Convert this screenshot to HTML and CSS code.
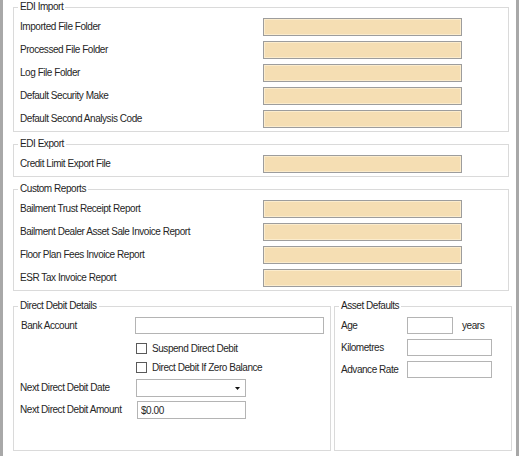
FILE: index.html
```html
<!DOCTYPE html>
<html lang="en">
<head>
    <meta charset="UTF-8">
    <title>Settings</title>
    <link rel="stylesheet" href="styles.css">
</head>
<body>
    <div class="frame">
        <fieldset class="group">
            <legend>EDI Import</legend>
            <div class="row"><label>Imported File Folder</label><input class="path" type="text"></div>
            <div class="row"><label>Processed File Folder</label><input class="path" type="text"></div>
            <div class="row"><label>Log File Folder</label><input class="path" type="text"></div>
            <div class="row"><label>Default Security Make</label><input class="path" type="text"></div>
            <div class="row"><label>Default Second Analysis Code</label><input class="path" type="text"></div>
        </fieldset>

        <fieldset class="group">
            <legend>EDI Export</legend>
            <div class="row"><label>Credit Limit Export File</label><input class="path" type="text"></div>
        </fieldset>

        <fieldset class="group">
            <legend>Custom Reports</legend>
            <div class="row"><label>Bailment Trust Receipt Report</label><input class="path" type="text"></div>
            <div class="row"><label>Bailment Dealer Asset Sale Invoice Report</label><input class="path" type="text"></div>
            <div class="row"><label>Floor Plan Fees Invoice Report</label><input class="path" type="text"></div>
            <div class="row"><label>ESR Tax Invoice Report</label><input class="path" type="text"></div>
        </fieldset>

        <div class="bottom">
            <fieldset class="group debit">
                <legend>Direct Debit Details</legend>
                <div class="field"><label class="indent">Bank Account</label><input class="box bank" type="text"></div>
                <div class="check-row first"><span class="check"></span><span>Suspend Direct Debit</span></div>
                <div class="check-row"><span class="check"></span><span>Direct Debit If Zero Balance</span></div>
                <div class="field date">
                    <label>Next Direct Debit Date</label>
                    <div class="box combo">
                        <svg width="5" height="3" viewBox="0 0 5 3"><polygon points="0,0 5,0 2.5,3" fill="#111"/></svg>
                    </div>
                </div>
                <div class="field amount"><label>Next Direct Debit Amount</label><input class="box money" type="text" value="$0.00"></div>
            </fieldset>

            <fieldset class="group asset">
                <legend>Asset Defaults</legend>
                <div class="field"><label>Age</label><input class="box age" type="text"><span class="unit">years</span></div>
                <div class="field next"><label>Kilometres</label><input class="box wide" type="text"></div>
                <div class="field next"><label>Advance Rate</label><input class="box wide" type="text"></div>
            </fieldset>
        </div>
    </div>
</body>
</html>
```

FILE: styles.css
```css
* {
    box-sizing: border-box;
}

body {
    margin: 0;
    background: #fff;
    color: #262626;
    font-family: "Liberation Sans", Arial, sans-serif;
    font-size: 10px;
    letter-spacing: -0.45px;
    line-height: 14px;
    white-space: nowrap;
}

.frame {
    width: 519px;
    height: 456px;
    border-left: 3px solid #a8a8a8;
    border-right: 3px solid #a8a8a8;
    padding: 0 7px 0 10px;
}

.group {
    margin: 0 0 5px;
    padding: 4px 6px 3px;
    border: 1px solid #dadada;
    min-width: 0;
}

.group legend {
    padding: 0 2px;
    margin-left: -2px;
    color: #1e1e1e;
    line-height: 14px;
}

.row {
    display: flex;
    align-items: center;
    height: 18px;
}

.row + .row {
    margin-top: 5px;
}

.row label {
    width: 243px;
}

input {
    font: inherit;
    letter-spacing: inherit;
    color: inherit;
    margin: 0;
    outline: none;
}

.path {
    width: 199px;
    height: 18px;
    padding: 0;
    background: #f5deb3;
    border: 1px solid #9d9d9d;
    box-shadow: inset 0 0 0 1px #fbeccd;
}

/* bottom two boxes */
.bottom {
    display: flex;
    gap: 3px;
    height: 152px;
    margin-top: 8px;
    margin-right: -3px;
}

.bottom .group {
    margin: 0;
}

.debit {
    width: 318px;
}

.asset {
    flex: 1;
}

.field {
    display: flex;
    align-items: center;
    height: 17px;
}

.debit .field label {
    width: 116px;
}

.indent {
    padding-left: 1px;
}

.box {
    height: 17px;
    padding: 0 3px;
    background: #fff;
    border: 1px solid #b4b4b4;
}

.bank {
    width: 190px;
}

.check-row {
    display: flex;
    align-items: center;
    height: 11px;
    margin-top: 8px;
    padding-left: 116px;
}

.check-row.first {
    margin-top: 9px;
}

.check {
    width: 11px;
    height: 11px;
    margin-right: 5px;
    border: 1px solid #5a5a5a;
    background: #fff;
}

.field.date {
    height: 18px;
    margin-top: 6px;
}

.combo {
    width: 110px;
    height: 18px;
    display: flex;
    align-items: center;
    justify-content: flex-end;
    padding-right: 5px;
}

.field.amount {
    height: 18px;
    margin-top: 4px;
}

.money {
    width: 109px;
    height: 18px;
    margin-left: 1px;
}

.asset .field label {
    width: 66px;
}

.asset .field.next {
    margin-top: 5px;
}

.age {
    width: 46px;
}

.unit {
    margin-left: 9px;
}

.wide {
    width: 85px;
}
```
